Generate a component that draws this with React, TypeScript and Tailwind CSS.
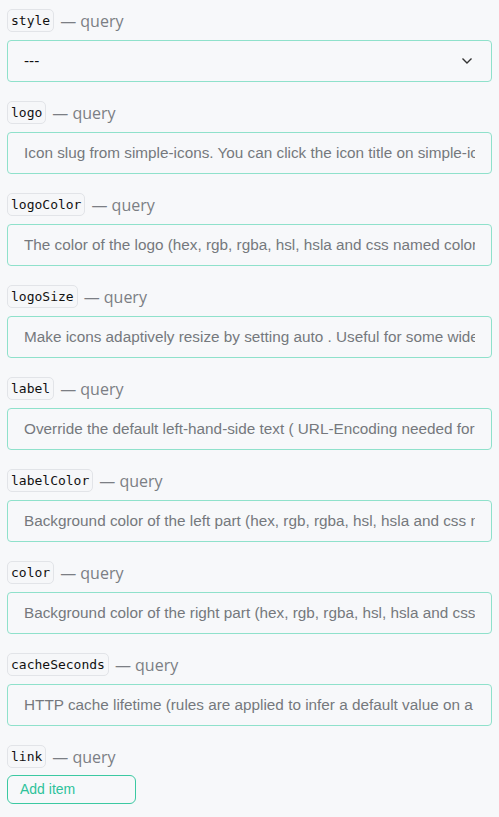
import React from "react";

// query parameters shown in the form
const FIELDS: { name: string; hint: string }[] = [
  { name: "logo", hint: "Icon slug from simple-icons. You can click the icon title on simple-icons to copy the slug" },
  { name: "logoColor", hint: "The color of the logo (hex, rgb, rgba, hsl, hsla and css named colors supported)" },
  { name: "logoSize", hint: "Make icons adaptively resize by setting auto . Useful for some wider logos" },
  { name: "label", hint: "Override the default left-hand-side text ( URL-Encoding needed for spaces or special characters!)" },
  { name: "labelColor", hint: "Background color of the left part (hex, rgb, rgba, hsl, hsla and css named colors supported)" },
  { name: "color", hint: "Background color of the right part (hex, rgb, rgba, hsl, hsla and css named colors supported)" },
  { name: "cacheSeconds", hint: "HTTP cache lifetime (rules are applied to infer a default value on a per-badge basis)" },
];

const Label = ({ name }: { name: string }) => (
  <div className="flex items-center gap-[6px] h-[23px]">
    <code className="font-['DejaVu_Sans_Mono',monospace] text-[13px] leading-[21px] text-[#111] px-[3px] rounded-[5px] border border-[#e2e4e8] bg-[#f6f7f9]">
      {name}
    </code>
    <span className="font-['Open_Sans',sans-serif] text-[16px] leading-[20px] text-[#7b7e84]">— query</span>
  </div>
);

export default function App() {
  return (
    <div className="min-h-screen w-full bg-[#f7f8fa] px-[7px] pt-[9px] font-['Liberation_Sans',Arial,sans-serif]">
      <div className="flex flex-col gap-[19px]">
        <div className="flex flex-col gap-[8px]">
          <Label name="style" />
          <div className="h-[42px] w-full rounded-[4px] border border-[#8fe1cb] flex items-center justify-between pl-[16px] pr-[18px]">
            <span className="text-[15.3px] text-[#111]">---</span>
            <svg width="12" height="8" viewBox="0 0 12 8" fill="none">
              <path d="M1.5 1.5 L6 6 L10.5 1.5" stroke="#333" strokeWidth="1.4" />
            </svg>
          </div>
        </div>
        {FIELDS.map((f) => (
          <div key={f.name} className="flex flex-col gap-[8px]">
            <Label name={f.name} />
            <div className="h-[42px] w-full rounded-[4px] border border-[#8fe1cb] flex items-center px-[16px]">
              <span className="block min-w-0 flex-1 text-[15.3px] text-[#75787d] whitespace-nowrap overflow-hidden">{f.hint}</span>
            </div>
          </div>
        ))}
        <div className="flex flex-col gap-[7px]">
          <Label name="link" />
          <button className="h-[29px] w-[129px] rounded-[6px] border border-[#3cc9a2] text-left pl-[12px] text-[14px] text-[#2ec29a]">
            Add item
          </button>
        </div>
      </div>
    </div>
  );
}
